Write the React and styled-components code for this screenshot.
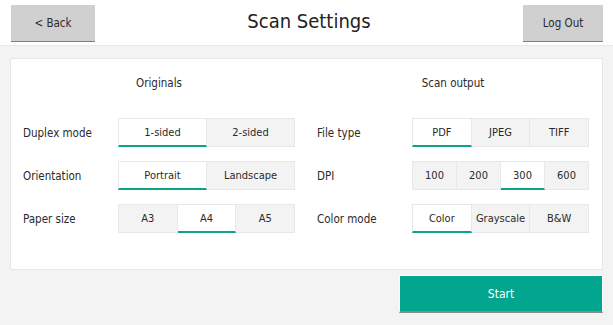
import React, { useState } from 'react'
import styled, { createGlobalStyle } from 'styled-components'

const GlobalStyle = createGlobalStyle`
    body {
        margin: 0;
        background: #f3f3f3;
        font-family: "DejaVu Sans Condensed", "DejaVu Sans", sans-serif;
        font-stretch: condensed;
        color: #2a2a2a;
    }
`

const groups = [
    {
        title: 'Originals',
        rows: [
            { label: 'Duplex mode', options: ['1-sided', '2-sided'], value: '1-sided' },
            { label: 'Orientation', options: ['Portrait', 'Landscape'], value: 'Portrait' },
            { label: 'Paper size', options: ['A3', 'A4', 'A5'], value: 'A4' },
        ],
    },
    {
        title: 'Scan output',
        rows: [
            { label: 'File type', options: ['PDF', 'JPEG', 'TIFF'], value: 'PDF' },
            { label: 'DPI', options: ['100', '200', '300', '600'], value: '300' },
            { label: 'Color mode', options: ['Color', 'Grayscale', 'B&W'], value: 'Color' },
        ],
    },
]

function Segmented({ options, initial }) {
    const [value, setValue] = useState(initial)
    return (
        <Segments>
            {options.map((o) => (
                <Segment key={o} active={o === value} onClick={() => setValue(o)}>
                    {o}
                </Segment>
            ))}
        </Segments>
    )
}

function App() {
    return (
        <>
            <GlobalStyle />
            <Header>
                <TopButton>&lt; Back</TopButton>
                <Title>Scan Settings</Title>
                <TopButton>Log Out</TopButton>
            </Header>
            <Main>
                <Card>
                    {groups.map((g) => (
                        <Column key={g.title}>
                            <Heading>{g.title}</Heading>
                            {g.rows.map((r) => (
                                <Row key={r.label}>
                                    <Label>{r.label}</Label>
                                    <Segmented options={r.options} initial={r.value} />
                                </Row>
                            ))}
                        </Column>
                    ))}
                </Card>
                <Footer>
                    <StartButton>Start</StartButton>
                </Footer>
            </Main>
        </>
    )
}

export default App

const Header = styled.header`
    height: 46px;
    background: #fff;
    border-bottom: 1px solid #e8e8e8;
    display: flex;
    align-items: flex-start;
    justify-content: space-between;
    padding: 5px 10px 0 11px;
    box-sizing: border-box;
`
const TopButton = styled.button`
    height: 37px;
    min-width: 80px;
    padding: 0 14px;
    background: #d0d0d0;
    border: none;
    border-bottom: 1px solid #7d7d7d;
    font-family: inherit;
    font-stretch: condensed;
    font-size: 11.5px;
    color: #2a2a2a;
    cursor: pointer;
    &:first-child {
        min-width: 84px;
    }
`
const Title = styled.h1`
    margin: 0;
    font-weight: normal;
    font-size: 20px;
    line-height: 32px;
    color: #222;
`
const Main = styled.main`
    padding: 12px 10px 0 10px;
`
const Card = styled.section`
    background: #fff;
    border: 1px solid #e6e6e6;
    height: 212px;
    box-sizing: border-box;
    display: grid;
    grid-template-columns: 1fr 1fr;
    padding: 0 13px 0 12px;
    column-gap: 22px;
`
const Column = styled.div`
    display: flex;
    flex-direction: column;
    gap: 14px;
`
const Heading = styled.div`
    font-size: 11.5px;
    text-align: center;
    padding: 17px 0 14px 95px;
    text-indent: -95px;
`
const Row = styled.div`
    display: flex;
    align-items: center;
    height: 29px;
`
const Label = styled.div`
    width: 95px;
    font-size: 11.5px;
`
const Segments = styled.div`
    display: flex;
    width: 177px;
`
const Segment = styled.button`
    flex: 1;
    height: 29px;
    padding: 0;
    font-family: inherit;
    font-stretch: condensed;
    font-size: 11px;
    color: #2a2a2a;
    background: ${(p) => (p.active ? '#fff' : '#f3f3f3')};
    border: 1px solid #e8e8e8;
    border-left: none;
    border-bottom: ${(p) => (p.active ? '2px solid #0aa48d' : '1px solid #e8e8e8')};
    cursor: pointer;
    &:first-child {
        border-left: 1px solid #e8e8e8;
    }
`
const Footer = styled.div`
    display: flex;
    justify-content: flex-end;
    padding-top: 5px;
`
const StartButton = styled.button`
    width: 204px;
    height: 38px;
    background: #02a58e;
    border: 1px solid #fff;
    border-bottom: 2px solid #8a8a8a;
    color: #fff;
    font-family: inherit;
    font-stretch: condensed;
    font-size: 12px;
    cursor: pointer;
`
